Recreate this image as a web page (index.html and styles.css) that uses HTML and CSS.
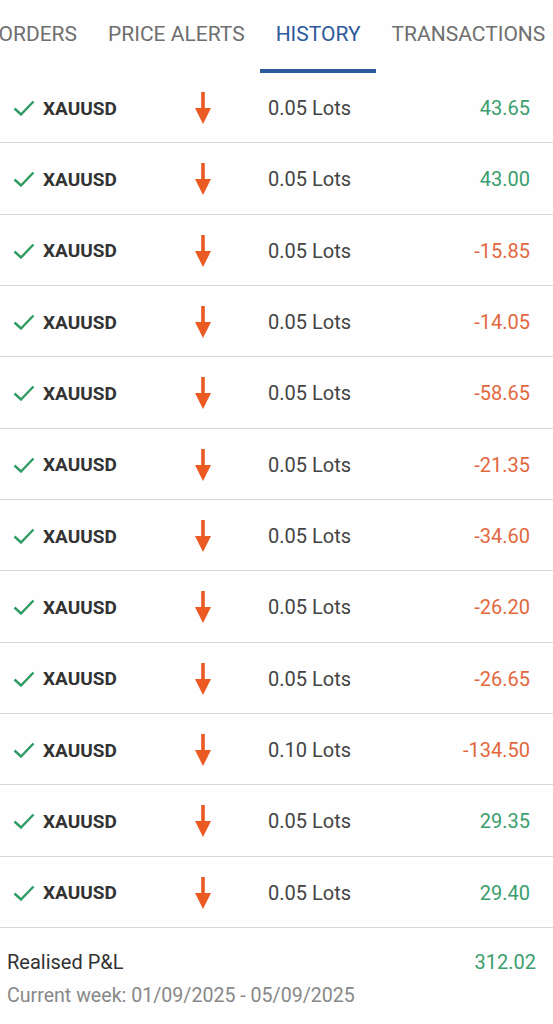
FILE: index.html
```html
<!DOCTYPE html>
<html lang="en">
<head>
<meta charset="UTF-8" />
<title>History</title>
<link rel="stylesheet" href="styles.css">
</head>
<body>

<div class="tabs">
    <div class="tab">ORDERS</div>
    <div class="tab">PRICE ALERTS</div>
    <div class="tab active">HISTORY</div>
    <div class="tab">TRANSACTIONS</div>
</div>

<div id="history">
    <div class="trade">
        <svg class="check" viewBox="0 0 22 16"><path d="M1.5 8.5 L8 14.5 L20.5 1.5" /></svg>
        <span class="symbol">XAUUSD</span>
        <svg class="arrow" viewBox="0 0 18 32"><path d="M7.2 0 H10.8 V16 H17 L9 32 L1 16 H7.2 Z" /></svg>
        <span class="lots">0.05 Lots</span>
        <span class="pnl profit">43.65</span>
    </div>
    <div class="trade">
        <svg class="check" viewBox="0 0 22 16"><path d="M1.5 8.5 L8 14.5 L20.5 1.5" /></svg>
        <span class="symbol">XAUUSD</span>
        <svg class="arrow" viewBox="0 0 18 32"><path d="M7.2 0 H10.8 V16 H17 L9 32 L1 16 H7.2 Z" /></svg>
        <span class="lots">0.05 Lots</span>
        <span class="pnl profit">43.00</span>
    </div>
    <div class="trade">
        <svg class="check" viewBox="0 0 22 16"><path d="M1.5 8.5 L8 14.5 L20.5 1.5" /></svg>
        <span class="symbol">XAUUSD</span>
        <svg class="arrow" viewBox="0 0 18 32"><path d="M7.2 0 H10.8 V16 H17 L9 32 L1 16 H7.2 Z" /></svg>
        <span class="lots">0.05 Lots</span>
        <span class="pnl loss">-15.85</span>
    </div>
    <div class="trade">
        <svg class="check" viewBox="0 0 22 16"><path d="M1.5 8.5 L8 14.5 L20.5 1.5" /></svg>
        <span class="symbol">XAUUSD</span>
        <svg class="arrow" viewBox="0 0 18 32"><path d="M7.2 0 H10.8 V16 H17 L9 32 L1 16 H7.2 Z" /></svg>
        <span class="lots">0.05 Lots</span>
        <span class="pnl loss">-14.05</span>
    </div>
    <div class="trade">
        <svg class="check" viewBox="0 0 22 16"><path d="M1.5 8.5 L8 14.5 L20.5 1.5" /></svg>
        <span class="symbol">XAUUSD</span>
        <svg class="arrow" viewBox="0 0 18 32"><path d="M7.2 0 H10.8 V16 H17 L9 32 L1 16 H7.2 Z" /></svg>
        <span class="lots">0.05 Lots</span>
        <span class="pnl loss">-58.65</span>
    </div>
    <div class="trade">
        <svg class="check" viewBox="0 0 22 16"><path d="M1.5 8.5 L8 14.5 L20.5 1.5" /></svg>
        <span class="symbol">XAUUSD</span>
        <svg class="arrow" viewBox="0 0 18 32"><path d="M7.2 0 H10.8 V16 H17 L9 32 L1 16 H7.2 Z" /></svg>
        <span class="lots">0.05 Lots</span>
        <span class="pnl loss">-21.35</span>
    </div>
    <div class="trade">
        <svg class="check" viewBox="0 0 22 16"><path d="M1.5 8.5 L8 14.5 L20.5 1.5" /></svg>
        <span class="symbol">XAUUSD</span>
        <svg class="arrow" viewBox="0 0 18 32"><path d="M7.2 0 H10.8 V16 H17 L9 32 L1 16 H7.2 Z" /></svg>
        <span class="lots">0.05 Lots</span>
        <span class="pnl loss">-34.60</span>
    </div>
    <div class="trade">
        <svg class="check" viewBox="0 0 22 16"><path d="M1.5 8.5 L8 14.5 L20.5 1.5" /></svg>
        <span class="symbol">XAUUSD</span>
        <svg class="arrow" viewBox="0 0 18 32"><path d="M7.2 0 H10.8 V16 H17 L9 32 L1 16 H7.2 Z" /></svg>
        <span class="lots">0.05 Lots</span>
        <span class="pnl loss">-26.20</span>
    </div>
    <div class="trade">
        <svg class="check" viewBox="0 0 22 16"><path d="M1.5 8.5 L8 14.5 L20.5 1.5" /></svg>
        <span class="symbol">XAUUSD</span>
        <svg class="arrow" viewBox="0 0 18 32"><path d="M7.2 0 H10.8 V16 H17 L9 32 L1 16 H7.2 Z" /></svg>
        <span class="lots">0.05 Lots</span>
        <span class="pnl loss">-26.65</span>
    </div>
    <div class="trade">
        <svg class="check" viewBox="0 0 22 16"><path d="M1.5 8.5 L8 14.5 L20.5 1.5" /></svg>
        <span class="symbol">XAUUSD</span>
        <svg class="arrow" viewBox="0 0 18 32"><path d="M7.2 0 H10.8 V16 H17 L9 32 L1 16 H7.2 Z" /></svg>
        <span class="lots">0.10 Lots</span>
        <span class="pnl loss">-134.50</span>
    </div>
    <div class="trade">
        <svg class="check" viewBox="0 0 22 16"><path d="M1.5 8.5 L8 14.5 L20.5 1.5" /></svg>
        <span class="symbol">XAUUSD</span>
        <svg class="arrow" viewBox="0 0 18 32"><path d="M7.2 0 H10.8 V16 H17 L9 32 L1 16 H7.2 Z" /></svg>
        <span class="lots">0.05 Lots</span>
        <span class="pnl profit">29.35</span>
    </div>
    <div class="trade">
        <svg class="check" viewBox="0 0 22 16"><path d="M1.5 8.5 L8 14.5 L20.5 1.5" /></svg>
        <span class="symbol">XAUUSD</span>
        <svg class="arrow" viewBox="0 0 18 32"><path d="M7.2 0 H10.8 V16 H17 L9 32 L1 16 H7.2 Z" /></svg>
        <span class="lots">0.05 Lots</span>
        <span class="pnl profit">29.40</span>
    </div>
</div>

<div class="summary">
    <div class="summary-row">
        <span>Realised P&amp;L</span>
        <span class="profit">312.02</span>
    </div>
    <div class="period">Current week: 01/09/2025 - 05/09/2025</div>
</div>

</body>
</html>
```

FILE: styles.css
```css
body {
    margin: 0;
    padding: 0;
    overflow: hidden;
    background-color: #fefefe;
    color: #333;
    font-family: Roboto, 'Noto Sans', sans-serif;
}

.tabs {
    display: flex;
    height: 72px;
    margin-left: -17px;
    white-space: nowrap;
}

.tab {
    padding: 0 15.5px;
    padding-top: 22px;
    box-sizing: border-box;
    font-size: 21px;
    color: #6f6f6f;
    border-bottom: 4px solid transparent;
    height: 73px;
}

.tab.active {
    color: #2d5a9b;
    border-bottom-color: #2d5a9b;
}

.trade {
    display: grid;
    grid-template-columns: 30px 151px 74px 1fr auto;
    align-items: center;
    height: 71.33px;
    box-sizing: border-box;
    padding: 2px 23px 0 13px;
    border-bottom: 1.5px solid #d8d8d8;
    font-size: 20px;
}

.check {
    width: 22px;
    height: 16px;
    fill: none;
    stroke: #2f9b62;
    stroke-width: 2.4;
}

.symbol {
    font-size: 19px;
    font-weight: bold;
    color: #333;
}

.arrow {
    width: 18px;
    height: 32px;
    fill: #ea5a22;
}

.lots {
    color: #444;
}

.profit {
    color: #3a9e6e;
}

.loss {
    color: #e2683f;
}

.summary {
    padding: 22px 17px 0 7px;
    font-size: 20px;
}

.summary-row {
    display: flex;
    justify-content: space-between;
}

.period {
    margin-top: 10px;
    font-size: 19.6px;
    color: #888;
}
```
